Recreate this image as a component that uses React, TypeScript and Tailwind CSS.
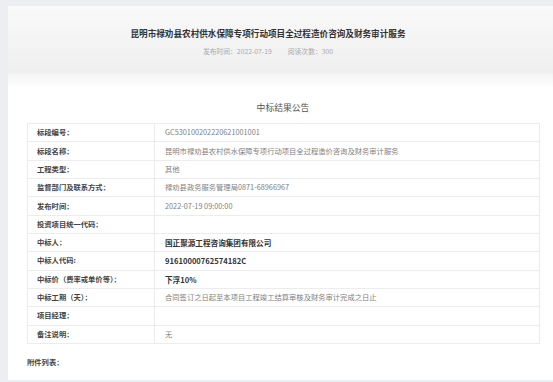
const rows: { label: string; value: string; bold?: boolean }[] = [
  { label: "标段编号：", value: "GC530100202220621001001" },
  { label: "标段名称：", value: "昆明市禄劝县农村供水保障专项行动项目全过程造价咨询及财务审计服务" },
  { label: "工程类型：", value: "其他" },
  { label: "监督部门及联系方式：", value: "禄劝县政务服务管理局0871-68966967" },
  { label: "发布时间：", value: "2022-07-19 09:00:00" },
  { label: "投资项目统一代码：", value: "" },
  { label: "中标人：", value: "国正聚源工程咨询集团有限公司", bold: true },
  { label: "中标人代码:", value: "91610000762574182C", bold: true },
  { label: "中标价（费率或单价等）：", value: "下浮10%", bold: true },
  { label: "中标工期（天）：", value: "合同签订之日起至本项目工程竣工结算审核及财务审计完成之日止" },
  { label: "项目经理：", value: "" },
  { label: "备注说明：", value: "无" },
];

export default function App() {
  return (
    <div
      className="h-[382px] w-full overflow-hidden bg-[#eceef1] pl-[8px] pt-[6px]"
      style={{ fontFamily: '"Noto Sans CJK SC", "Liberation Sans", sans-serif' }}
    >
      <div className="h-[374px] w-[545px] bg-white">
        {/* header */}
        <div className="flex h-[67px] flex-col items-center bg-gradient-to-b from-[#f9f9f9] to-[#efefef] pr-[25px] pt-[21px]">
          <h1 className="text-[8.6px] font-bold leading-[12px] text-[#333]">
            昆明市禄劝县农村供水保障专项行动项目全过程造价咨询及财务审计服务
          </h1>
          <div className="mt-[7px] flex gap-[16px] text-[6.8px] leading-[10px] text-[#aaa]">
            <span>发布时间：2022-07-19</span>
            <span>阅读次数：300</span>
          </div>
        </div>
        <div className="h-[16px] bg-gradient-to-b from-[#f3f3f3] to-white" />

        {/* body */}
        <div className="pl-[19px]">
          <div className="mt-[13px] w-[512px] text-center text-[8.8px] leading-[12px] text-[#555]">
            中标结果公告
          </div>
          <div className="mt-[9px] w-[513px] border-t border-l border-r border-[#ececec]">
            {rows.map((r) => (
              <div key={r.label} className="flex h-[18.33px] items-center border-b border-[#ececec]">
                <div className="flex h-full w-[127px] shrink-0 items-center border-r border-[#ececec] pl-[9px] text-[7.3px] font-bold text-[#444]">
                  {r.label}
                </div>
                <div
                  className={
                    r.bold
                      ? "pl-[10px] text-[7.6px] font-bold text-[#333]"
                      : "pl-[10px] text-[7.3px] text-[#808080]"
                  }
                >
                  {r.value}
                </div>
              </div>
            ))}
          </div>
          <div className="mt-[13px] text-[7.3px] font-bold leading-[10px] text-[#444]">附件列表：</div>
        </div>
      </div>
    </div>
  );
}
